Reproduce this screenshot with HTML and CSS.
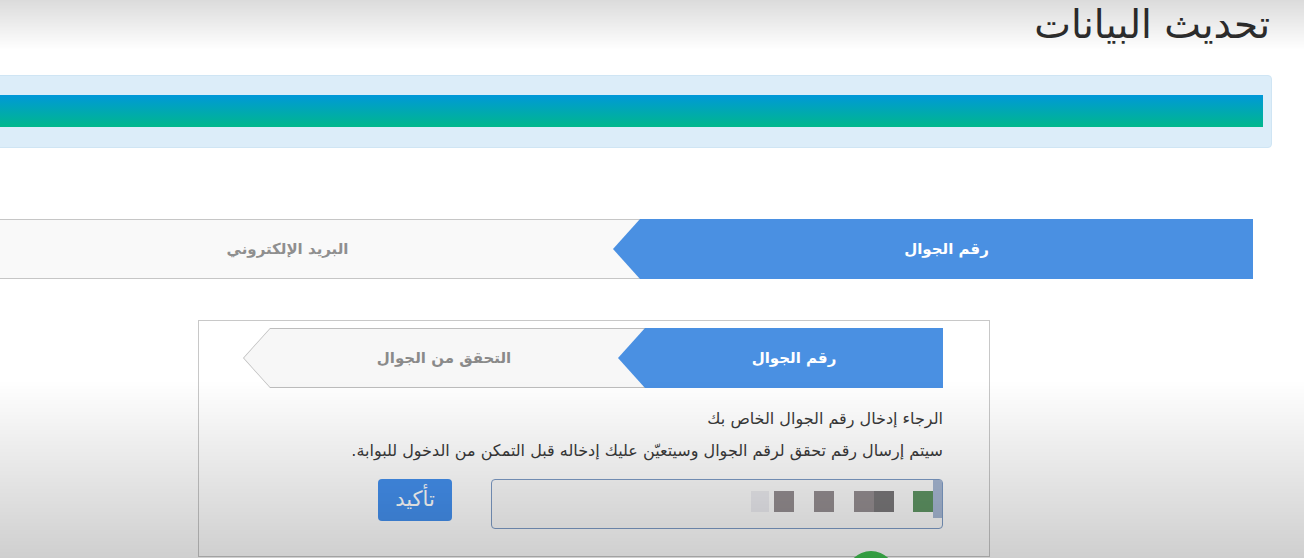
FILE: index.html
```html
<!DOCTYPE html>
<html lang="ar" dir="rtl">
<head>
    <meta charset="UTF-8">
    <meta name="viewport" content="width=device-width, initial-scale=1.0">
    <title>تحديث البيانات</title>
    <link rel="stylesheet" href="styles.css">
</head>
<body>
    <div class="page">
        <h1 class="page-title">تحديث البيانات</h1>

        <div class="progress">
            <div class="progress-bar" style="width: 100%"></div>
        </div>

        <div class="steps steps-main">
            <div class="step step-active">رقم الجوال</div>
            <div class="step step-idle">البريد الإلكتروني</div>
        </div>

        <div class="card">
            <div class="steps steps-sub">
                <div class="step step-active">رقم الجوال</div>
                <div class="step step-idle"><span>التحقق من الجوال</span></div>
            </div>

            <p class="hint">الرجاء إدخال رقم الجوال الخاص بك</p>
            <p class="hint hint-second">سيتم إرسال رقم تحقق لرقم الجوال وسيتعيّن عليك إدخاله قبل التمكن من الدخول للبوابة.</p>

            <div class="form-row">
                <div class="phone-input">
                    <span class="blur blur-edge"></span>
                    <span class="blur blur-green"></span>
                    <span class="blur blur-dark"></span>
                    <span class="blur blur-grey"></span>
                    <span class="blur blur-grey gap"></span>
                    <span class="blur blur-grey gap"></span>
                    <span class="blur blur-faint gap-small"></span>
                </div>
                <button class="btn-confirm">تأكيد</button>
            </div>
        </div>
    </div>

    <div class="vignette"></div>
    <div class="green-dot"></div>
</body>
</html>
```

FILE: styles.css
```css
html {
    overflow: hidden;
}

body {
    margin: 0;
    background-color: #fff;
    font-family: "DejaVu Sans", sans-serif;
    color: #333;
}

.page {
    width: 1356px;
    margin-right: 32px;
}

.page-title {
    margin: 0 2px 0 0;
    font-size: 39px;
    font-weight: normal;
    line-height: 50px;
    color: #2e2e2e;
}

.progress {
    margin-top: 25px;
    padding: 19px 8px 20px 0;
    background-color: #dcedf9;
    border: 1px solid #cfe5f4;
    border-radius: 4px;
}

.progress-bar {
    height: 32px;
    background: linear-gradient(to bottom, #0098d9, #00b88c);
}

/* step tabs */
.steps {
    display: flex;
    height: 60px;
}

.step {
    display: flex;
    align-items: center;
    justify-content: center;
    font-size: 15px;
    font-weight: bold;
}

.step-active {
    position: relative;
    z-index: 1;
    color: #fff;
    background-color: #4a90e2;
    clip-path: polygon(27px 0, 100% 0, 100% 100%, 27px 100%, 0 50%);
    padding-left: 27px;
    box-sizing: border-box;
    margin-left: -27px;
}

.steps-main {
    margin: 71px 19px 0;
}

.steps-main .step-active {
    width: 640px;
}

.steps-main .step-idle {
    flex: 1;
    color: #8f8f8f;
    background-color: #f9f9f9;
    border-top: 1px solid #c6c6c6;
    border-bottom: 1px solid #c6c6c6;
}

.card {
    width: 700px;
    margin: 41px auto 0;
    padding: 7px 46px 27px 44px;
    border: 1px solid #c8c8c8;
    background-color: #fff;
}

.steps-sub .step-active {
    width: 325px;
}

.steps-sub .step-idle {
    flex: 1;
    position: relative;
    color: #8a8a8a;
    background-color: #bdbdbd;
    clip-path: polygon(27px 0, 100% 0, 100% 100%, 27px 100%, 0 50%);
}

.steps-sub .step-idle::before {
    content: "";
    position: absolute;
    top: 1px;
    right: 0;
    bottom: 1px;
    left: 1px;
    background-color: #f7f7f7;
    clip-path: polygon(26px 0, 100% 0, 100% 100%, 26px 100%, 0 50%);
}

.steps-sub .step-idle span {
    position: relative;
}

.hint {
    margin: 20px 0 0;
    font-size: 16px;
    line-height: 22px;
    color: #3a3a3a;
}

.hint-second {
    margin-top: 10px;
}

.form-row {
    display: flex;
    align-items: flex-start;
    gap: 39px;
    margin-top: 17px;
}

.phone-input {
    display: flex;
    align-items: flex-start;
    width: 452px;
    height: 50px;
    box-sizing: border-box;
    border: 1px solid #7e9cc6;
    border-radius: 4px;
    background-color: #fbfbfb;
}

.blur {
    display: block;
    width: 20px;
    height: 21px;
    margin-top: 11px;
}

.blur-edge {
    width: 9px;
    height: 38px;
    margin-top: 0;
    background-color: #a7b8d4;
}

.blur-green {
    background-color: #5f9564;
}

.blur-dark {
    margin-right: 19px;
    background-color: #7a787a;
}

.blur-grey {
    background-color: #958e91;
}

.blur-grey.gap {
    margin-right: 20px;
}

.blur-faint {
    background-color: #ebebef;
    width: 18px;
}

.blur-faint.gap-small {
    margin-right: 5px;
}

.btn-confirm {
    width: 74px;
    height: 42px;
    padding: 0 0 3px;
    border: none;
    border-radius: 4px;
    background-color: #4490ee;
    color: #fff;
    font-family: "DejaVu Sans", sans-serif;
    font-size: 21px;
}

/* darkening from the recording, top and bottom */
.vignette {
    position: fixed;
    top: 0;
    left: 0;
    right: 0;
    bottom: 0;
    pointer-events: none;
    z-index: 5;
    background:
        linear-gradient(to bottom, rgba(0, 0, 0, 0.14) 0, rgba(0, 0, 0, 0) 50px),
        linear-gradient(to bottom, rgba(0, 0, 0, 0) 380px, rgba(0, 0, 0, 0.19) 558px);
}

.green-dot {
    position: fixed;
    left: 846px;
    top: 551px;
    width: 50px;
    height: 50px;
    border-radius: 50%;
    background-color: #3fbf4f;
    z-index: 4;
}
```
